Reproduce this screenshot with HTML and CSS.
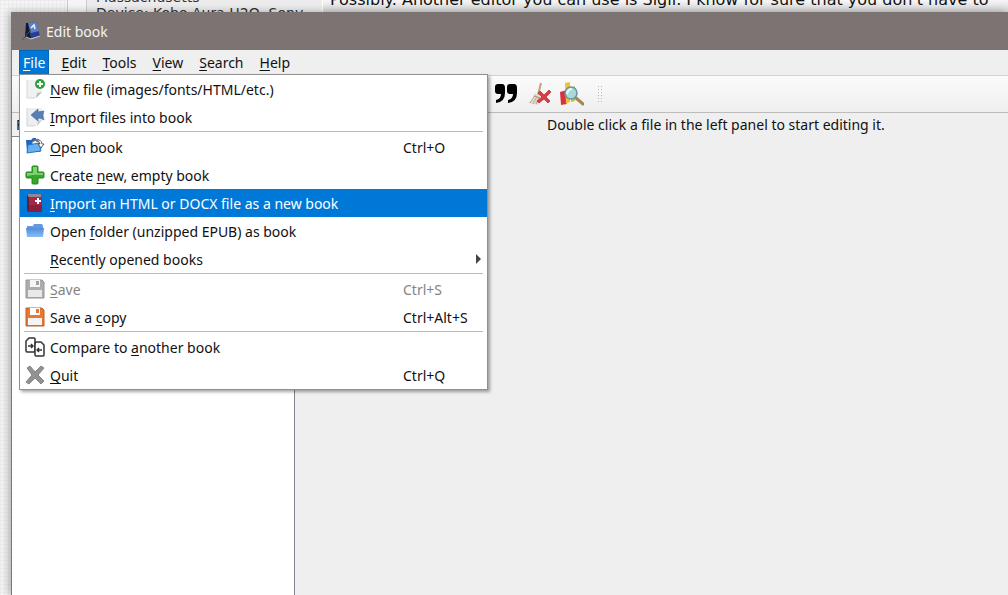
FILE: index.html
```html
<!DOCTYPE html>
<html lang="en">
  <head>
    <meta charset="UTF-8" />
    <meta name="viewport" content="width=device-width, initial-scale=1.0" />
    <title>Edit book</title>
    <link rel="stylesheet" href="styles.css">
  </head>
  <body>
    <div class="backdrop">
      <div class="post-author">
        <div>Massachusetts</div>
        <div>Device: Kobo Aura H2O, Sony</div>
      </div>
      <div class="post-text">Possibly. Another editor you can use is Sigil. I know for sure that you don't have to</div>
    </div>

    <div class="window">
      <header class="titlebar">
        <svg width="20" height="20" viewBox="0 0 20 20">
          <path d="M6 2 14 1 18 15 9 17Z" fill="#263f96" />
          <path d="M6 2 14 1 17 10 9 12Z" fill="#5c80c4" />
          <path d="M4 2 6 2 9 17 8 18 3 16Z" fill="#111831" />
          <path d="M4 16 9 18 18 15" fill="none" stroke="#c7c9d3" />
          <path d="M9 7 12 4 13 8" fill="none" stroke="#e9f2ff" stroke-width="1.5" />
          <path d="M0 19 9 9" stroke="#4a516b" />
        </svg>
        <span>Edit book</span>
      </header>

      <nav class="menubar">
        <div class="menu-root">
          <button class="menu-title open"><u>F</u>ile</button>
          <div class="menu">
            <button class="item">
              <svg width="20" height="20" viewBox="0 0 20 20">
                <path d="M2 1H17V13L12 19H2Z" fill="#eef0f1" />
                <path d="M2 1V19H10" fill="none" stroke="#d5d8da" />
                <path d="M11 19 12 14 17 13Z" fill="#b9bcbe" />
                <circle cx="15" cy="5" r="5" fill="#28a335" />
                <path d="M15 2V8M12 5H18" stroke="#fff" stroke-width="2" />
              </svg>
              <span class="label"><u>N</u>ew file (images/fonts/HTML/etc.)</span>
            </button>
            <button class="item">
              <svg width="20" height="20" viewBox="0 0 20 20">
                <path d="M2 1H17V13L12 19H2Z" fill="#eceef0" />
                <path d="M2 1V19H10" fill="none" stroke="#d0d4d7" />
                <path d="M12 19 13 14 17 13Z" fill="#c2c5c8" />
                <path d="M6 8 13 2V5Q18 4 19 4 17 8 19 13 16 11 13 11V14Z" fill="#587fb4" stroke="#45658e" stroke-width=".6" />
              </svg>
              <span class="label"><u>I</u>mport files into book</span>
            </button>
            <hr>
            <button class="item">
              <svg width="20" height="20" viewBox="0 0 20 20">
                <path d="M1 3H6L8 1H11L12 5H15V15H2Z" fill="#2265b8" />
                <path d="M7 5 13 2 17 7 15 14H7Z" fill="#f5f7f8" stroke="#6e7377" />
                <path d="M3 8 14 6 16 14 2 16Z" fill="#68aff1" stroke="#2674cb" />
                <path d="M11 4Q16 1 17 7H19L16 11 13 7H15Q15 4 11 4Z" fill="#fff" stroke="#3c4145" stroke-width=".8" />
              </svg>
              <span class="label"><u>O</u>pen book</span>
              <span class="shortcut">Ctrl+O</span>
            </button>
            <button class="item">
              <svg width="20" height="20" viewBox="0 0 20 20">
                <path d="M8 1H12Q13 1 13 2V7H18Q19 7 19 8V12Q19 13 18 13H13V18Q13 19 12 19H8Q7 19 7 18V13H2Q1 13 1 12V8Q1 7 2 7H7V2Q7 1 8 1Z" fill="#35a72d" stroke="#24871f" />
                <path d="M8 2H12V8H18V10Q10 9 2 11V8H8Z" fill="#81d270" />
              </svg>
              <span class="label">Create <u>n</u>ew, empty book</span>
            </button>
            <button class="item selected">
              <svg width="20" height="20" viewBox="0 0 20 20">
                <path d="M3 1H16V5H3Z" fill="#8e8795" />
                <path d="M3 4H17V19H3Q2 19 2 17V3Z" fill="#a52743" />
                <path d="M3 12H17V19H3Z" fill="#86203c" />
                <path d="M2 2 4 4V19L2 17Z" fill="#621e39" />
                <path d="M13 5V11M10 8H16" stroke="#fff" stroke-width="2" />
              </svg>
              <span class="label"><u>I</u>mport an HTML or DOCX file as a new book</span>
            </button>
            <button class="item">
              <svg width="20" height="20" viewBox="0 0 20 20">
                <defs>
                  <linearGradient id="folder" x2="0" y2="1">
                    <stop stop-color="#4f8cd9" />
                    <stop offset="1" stop-color="#8cbcf5" />
                  </linearGradient>
                </defs>
                <path d="M2 5H8L9 3H17L18 5V12H2Z" fill="#6599dc" />
                <path d="M1 7H19L18 16H2Z" fill="url(#folder)" />
              </svg>
              <span class="label">Open <u>f</u>older (unzipped EPUB) as book</span>
            </button>
            <button class="item">
              <span class="no-icon"></span>
              <span class="label"><u>R</u>ecently opened books</span>
              <svg class="arrow" width="5" height="10" viewBox="0 0 5 10"><path d="M0 0 5 5 0 10Z" fill="#444" /></svg>
            </button>
            <hr>
            <button class="item" disabled>
              <svg width="20" height="20" viewBox="0 0 20 20">
                <path d="M1 1H17L19 3V19H1Z" fill="#adadad" stroke="#969696" />
                <path d="M5 1H15V8H5Z" fill="#f5f5f5" />
                <path d="M11 2H14V6H11Z" fill="#a2a2a2" />
                <path d="M3 11H17V18H3Z" fill="#e9e9e9" />
              </svg>
              <span class="label"><u>S</u>ave</span>
              <span class="shortcut">Ctrl+S</span>
            </button>
            <button class="item">
              <svg width="20" height="20" viewBox="0 0 20 20">
                <path d="M1 1H17L19 3V19H1Z" fill="#ec762f" stroke="#b9602d" />
                <path d="M5 1H15V8H5Z" fill="#fff" />
                <path d="M11 2H14V6H11Z" fill="#e67835" />
                <path d="M3 11H17V18H3Z" fill="#f2f4f5" />
              </svg>
              <span class="label">Save a <u>c</u>opy</span>
              <span class="shortcut">Ctrl+Alt+S</span>
            </button>
            <hr>
            <button class="item">
              <svg width="20" height="20" viewBox="0 0 20 20">
                <g fill="#fff" stroke="#333" stroke-width="1.5" stroke-linejoin="round">
                  <path d="M4 1H9Q10 1 10 2V15H2Q1 15 1 14V4Z" />
                  <path d="M12 5H16L19 8V18Q19 19 18 19H11Q10 19 10 18V7Q10 5 12 5Z" />
                  <path d="M3 9H8M6 7 8 9 6 11M17 13H12M14 11 12 13 14 15" fill="none" />
                </g>
              </svg>
              <span class="label">Compare to <u>a</u>nother book</span>
            </button>
            <button class="item">
              <svg width="20" height="20" viewBox="0 0 20 20">
                <path d="M2 3 5 1 10 7 16 1 19 3 13 10 19 16 16 19 10 13 4 19 1 17 7 10Z" fill="#929292" stroke="#858585" />
              </svg>
              <span class="label"><u>Q</u>uit</span>
              <span class="shortcut">Ctrl+Q</span>
            </button>
          </div>
        </div>
        <button class="menu-title"><u>E</u>dit</button>
        <button class="menu-title"><u>T</u>ools</button>
        <button class="menu-title"><u>V</u>iew</button>
        <button class="menu-title"><u>S</u>earch</button>
        <button class="menu-title"><u>H</u>elp</button>
      </nav>

      <div class="toolbar">
        <button class="tool" aria-label="Smarten punctuation">
          <svg width="24" height="24" viewBox="0 0 24 24">
            <path id="quote" d="M4 2H8Q11 2 11 6V11Q11 20 2 21V18Q7 17 7 12H4Q1 12 1 9V5Q1 2 4 2Z" />
            <use href="#quote" x="12" />
          </svg>
        </button>
        <button class="tool" aria-label="Remove unused CSS">
          <svg width="24" height="24" viewBox="0 0 24 24">
            <path d="M14 1 11 13" stroke="#c4a47c" stroke-width="2" />
            <path d="M8 11 14 14 11 23 1 21 6 17Z" fill="#e2dccf" />
            <path d="M8 13 3 21M10 14 6 22M12 15 9 22" stroke="#b9a78f" />
            <path d="M7 14 13 16" stroke="#c98a80" stroke-width="1" />
            <path d="M11 11 13 9 17 13 22 8 24 10 19 15 23 19 21 21 17 17 12 21 10 19 15 15Z" fill="#db3d45" stroke="#b72531" stroke-width=".7" />
          </svg>
        </button>
        <button class="tool" aria-label="Run reports">
          <svg width="24" height="24" viewBox="0 0 24 24">
            <path d="M0 10 7 8V22L1 23Z" fill="#d6333d" />
            <path d="M5 1 10 0V20L6 22Z" fill="#f4bf31" />
            <path d="M11 6 15 4V19L11 20Z" fill="#a9c957" />
            <path d="M16 16 23 22" stroke="#a98453" stroke-width="3" stroke-linecap="round" />
            <circle cx="11" cy="11" r="6" fill="#a9dad8" stroke="#6a94a0" stroke-width="1.5" />
            <path d="M7 12Q8 7 12 7" fill="none" stroke="#edfafa" stroke-width="2" />
          </svg>
        </button>
        <span class="grip"></span>
      </div>

      <main class="workspace">
        <aside class="files">
          <h2>Files browser</h2>
          <div class="file-list"></div>
        </aside>
        <section class="editor">Double click a file in the left panel to start editing it.</section>
      </main>
    </div>
  </body>
</html>
```

FILE: styles.css
```css
* {
  box-sizing: border-box;
}
body {
  margin: 0;
  height: 100vh;
  overflow: hidden;
  display: flex;
  flex-direction: column;
  font-family: "Noto Sans", "Open Sans", sans-serif;
  font-size: 14px;
  color: #111;
  background-color: #f5f5f5;
  background-image: linear-gradient(#ececec 1px, transparent 1px),
    linear-gradient(90deg, #ececec 1px, transparent 1px);
  background-size: 4px 4px;
}
button {
  font: inherit;
  color: inherit;
  background: none;
  border: none;
  padding: 0;
}
u {
  text-underline-offset: 2px;
  text-decoration-thickness: 1px;
  text-decoration-skip-ink: none;
}
svg {
  display: block;
  flex: none;
}

/* forum page behind the window */
.backdrop {
  display: flex;
  flex: none;
  height: 12px;
  margin-left: 67px;
  overflow: hidden;
  border-left: 1px solid #ccc;
  background: #f5f5f5;
  font-family: Verdana, "DejaVu Sans", sans-serif;
  white-space: nowrap;
}
.post-author {
  flex: none;
  width: 236px;
  margin-left: 18px;
  padding-left: 9px;
  border-left: 1px solid #ccc;
  background: #ececec;
  font-size: 14px;
  line-height: 16px;
  color: #333;
}
.post-author div:first-child {
  margin-top: -11px;
}
.post-text {
  flex: 1;
  margin-top: -11px;
  padding-left: 7px;
  border-left: 1px solid #fff;
  background: linear-gradient(#f5f5f5 50%, #d5d5d5);
  font-size: 16px;
  line-height: 21px;
}

.window {
  flex: 1;
  display: flex;
  flex-direction: column;
  margin-left: 11px;
  border-left: 1px solid #777;
  background: #efefef;
  box-shadow: -2px 0 8px rgba(0, 0, 0, 0.3);
}
.titlebar {
  display: flex;
  align-items: center;
  gap: 4px;
  height: 38px;
  padding-left: 10px;
  background: #7b7473;
  color: #f4f4f4;
}

.menubar {
  display: flex;
  height: 25px;
  padding-left: 7px;
  gap: 2px;
}
.menu-root {
  position: relative;
  display: flex;
}
.menu-title {
  padding: 0 7px;
}
.menu-title.open {
  padding: 0 3px;
  border: 1px solid #0067b8;
  background: #0078d7;
  color: #fff;
}
.menu-root + .menu-title {
  margin-left: 3px;
}
.menu {
  position: absolute;
  z-index: 1;
  top: 24px;
  left: 0;
  width: 469px;
  border: 1px solid #909090;
  background: #fff;
  box-shadow: 2px 2px 3px rgba(0, 0, 0, 0.35);
}
.item {
  display: flex;
  align-items: center;
  width: 100%;
  height: 28px;
  padding-left: 5px;
  text-align: left;
  white-space: nowrap;
}
.item.selected {
  background: #0078d7;
  color: #fff;
}
.item:disabled {
  color: #838383;
}
.no-icon {
  width: 20px;
}
.label {
  flex: 1;
  margin-left: 5px;
}
.shortcut {
  width: 84px;
}
.arrow {
  margin-right: 6px;
}
.menu hr {
  height: 2px;
  margin: 0 4px;
  border: none;
  border-top: 1px solid #bbb;
}

.toolbar {
  display: flex;
  align-items: center;
  gap: 9px;
  height: 38px;
  padding-left: 482px;
  border-top: 1px solid #d2d2d2;
  border-bottom: 1px solid #bcbcbc;
  background: linear-gradient(#fbfbfb, #efefef);
}
.grip {
  width: 7px;
  height: 18px;
  margin-left: 4px;
  background: radial-gradient(circle, #bbb 1px, transparent 1px) 0 0 / 3px 3px;
}

.workspace {
  flex: 1;
  display: flex;
}
.files {
  display: flex;
  flex-direction: column;
  width: 283px;
}
.files h2 {
  height: 23px;
  margin: 0;
  padding-left: 4px;
  font-size: 14px;
  font-weight: normal;
  line-height: 24px;
}
.file-list {
  flex: 1;
  border: 1px solid #828790;
  border-left: none;
  border-bottom: none;
  background: #fff;
}
.editor {
  flex: 1;
  padding: 2px 0 0 252px;
  line-height: 20px;
}
```
